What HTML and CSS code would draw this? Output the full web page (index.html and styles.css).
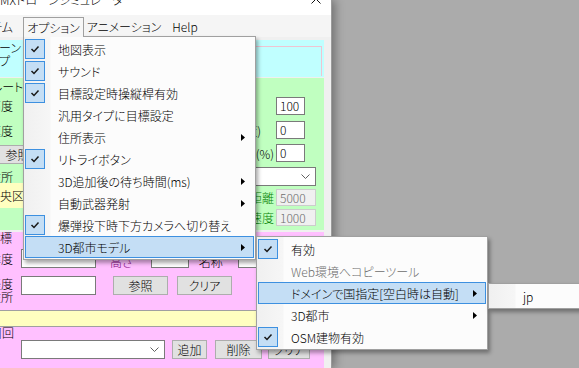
FILE: index.html
```html
<!DOCTYPE html>
<html lang="ja">
<head>
    <meta charset="UTF-8">
    <title>WMXドローンシミュレータ</title>
    <link rel="stylesheet" href="styles.css">
</head>
<body>
    <div class="win">
        <div class="titlebar">
            <span class="title">MXドローンシミュレータ</span>
            <svg class="close" width="10" height="10" viewBox="0 0 10 10"><path d="M0.5 0.5 L9.5 9.5 M9.5 0.5 L0.5 9.5" stroke="#111" stroke-width="1"/></svg>
        </div>
        <div class="menubar">
            <span class="mb mb-sys"><span>システム</span></span>
            <span class="mb mb-opt">オプション</span>
            <span class="mb mb-anim">アニメーション</span>
            <span class="mb mb-help">Help</span>
        </div>

        <div class="client">
            <div class="panel cyan">
                <div class="cy-lbl">ドローン<br>タイプ</div>
                <div class="cy-box"></div>
            </div>

            <div class="panel green">
                <div class="gl">
                    <div class="g-head">ルート条件</div>
                    <div class="frow r-alt"><span class="lbl"><span>高度</span></span></div>
                    <div class="frow r-spd"><span class="lbl"><span>速度</span></span></div>
                    <div class="frow r-btn"><span class="btn btn-ref">参照</span></div>
                    <div class="frow r-addr"><span class="lbl"><span>住所</span></span></div>
                    <div class="addr-box"><span>中央区日本橋1丁目</span></div>
                </div>
                <div class="gr">
                    <div class="rrow"><span class="tb num">100</span></div>
                    <div class="rrow gap6"><span class="lb lb-wide">旋回角(度)</span><span class="tb num">0</span></div>
                    <div class="rrow gap5"><span class="lb">スロットル(%)</span><span class="tb num">0</span></div>
                    <div class="cb cb-right"><svg width="9" height="5" viewBox="0 0 9 5"><path d="M0.5 0.5 L4.5 4.5 L8.5 0.5" fill="none" stroke="#606060"/></svg></div>
                    <div class="rrow gap3"><span class="lb green-t">距離</span><span class="tb dis">5000</span></div>
                    <div class="rrow gap3"><span class="lb green-t">速度</span><span class="tb dis">1000</span></div>
                </div>
            </div>

            <div class="panel pink">
                <div class="p-head">目標</div>
                <div class="frow p-r1">
                    <span class="lbl"><span>緯度</span></span>
                    <span class="tb w75"></span>
                    <span class="purple">高さ</span>
                    <span class="tb w38"></span>
                    <span class="p-name">名称</span>
                    <span class="tb w60"></span>
                </div>
                <div class="frow p-r2">
                    <span class="lbl lbl2"><span>経度</span><span>住所</span></span>
                    <span class="tb w75"></span>
                    <span class="btn w55 ml17">参照</span>
                    <span class="btn w55 ml9">クリア</span>
                </div>
                <div class="p-yel"></div>
                <div class="lbl p-lap"><span>周回</span></div>
                <div class="frow p-r3">
                    <span class="lbl"></span>
                    <div class="cb w144"><svg width="9" height="5" viewBox="0 0 9 5"><path d="M0.5 0.5 L4.5 4.5 L8.5 0.5" fill="none" stroke="#606060"/></svg></div>
                    <span class="btn w35 ml7">追加</span>
                    <span class="btn w47 ml8">削除</span>
                    <span class="btn w42 ml6">クリア</span>
                </div>
            </div>
        </div>
    </div>

    <div class="menu m1">
        <div class="mi"><span class="chk on"><svg width="18" height="18" viewBox="0 0 18 18"><path d="M5.5 9 L8 11.5 L12.5 6.5" fill="none" stroke="#1a1a1a" stroke-width="1.5"/></svg></span><span class="t">地図表示</span></div>
        <div class="mi"><span class="chk on"><svg width="18" height="18" viewBox="0 0 18 18"><path d="M5.5 9 L8 11.5 L12.5 6.5" fill="none" stroke="#1a1a1a" stroke-width="1.5"/></svg></span><span class="t">サウンド</span></div>
        <div class="mi"><span class="chk on"><svg width="18" height="18" viewBox="0 0 18 18"><path d="M5.5 9 L8 11.5 L12.5 6.5" fill="none" stroke="#1a1a1a" stroke-width="1.5"/></svg></span><span class="t">目標設定時操縦桿有効</span></div>
        <div class="mi"><span class="chk"></span><span class="t">汎用タイプに目標設定</span></div>
        <div class="mi"><span class="chk"></span><span class="t">住所表示</span><svg class="arr" width="4" height="7" viewBox="0 0 4 7"><path d="M0 0 L4 3.5 L0 7 Z"/></svg></div>
        <div class="mi"><span class="chk on"><svg width="18" height="18" viewBox="0 0 18 18"><path d="M5.5 9 L8 11.5 L12.5 6.5" fill="none" stroke="#1a1a1a" stroke-width="1.5"/></svg></span><span class="t">リトライボタン</span></div>
        <div class="mi"><span class="chk"></span><span class="t">3D追加後の待ち時間(ms)</span><svg class="arr" width="4" height="7" viewBox="0 0 4 7"><path d="M0 0 L4 3.5 L0 7 Z"/></svg></div>
        <div class="mi"><span class="chk"></span><span class="t">自動武器発射</span><svg class="arr" width="4" height="7" viewBox="0 0 4 7"><path d="M0 0 L4 3.5 L0 7 Z"/></svg></div>
        <div class="mi"><span class="chk on"><svg width="18" height="18" viewBox="0 0 18 18"><path d="M5.5 9 L8 11.5 L12.5 6.5" fill="none" stroke="#1a1a1a" stroke-width="1.5"/></svg></span><span class="t">爆弾投下時下方カメラへ切り替え</span></div>
        <div class="mi hl"><span class="chk"></span><span class="t">3D都市モデル</span><svg class="arr" width="4" height="7" viewBox="0 0 4 7"><path d="M0 0 L4 3.5 L0 7 Z"/></svg></div>
    </div>

    <div class="menu m2">
        <div class="mi"><span class="chk on"><svg width="18" height="18" viewBox="0 0 18 18"><path d="M5.5 9 L8 11.5 L12.5 6.5" fill="none" stroke="#1a1a1a" stroke-width="1.5"/></svg></span><span class="t">有効</span></div>
        <div class="mi off"><span class="chk"></span><span class="t">Web環境へコピーツール</span></div>
        <div class="mi hl"><span class="chk"></span><span class="t">ドメインで国指定[空白時は自動]</span><svg class="arr" width="4" height="7" viewBox="0 0 4 7"><path d="M0 0 L4 3.5 L0 7 Z"/></svg></div>
        <div class="mi"><span class="chk"></span><span class="t">3D都市</span><svg class="arr" width="4" height="7" viewBox="0 0 4 7"><path d="M0 0 L4 3.5 L0 7 Z"/></svg></div>
        <div class="mi"><span class="chk on"><svg width="18" height="18" viewBox="0 0 18 18"><path d="M5.5 9 L8 11.5 L12.5 6.5" fill="none" stroke="#1a1a1a" stroke-width="1.5"/></svg></span><span class="t">OSM建物有効</span></div>
    </div>

    <div class="menu m3">
        <div class="mi"><span class="chk"></span><span class="t">jp</span></div>
    </div>
</body>
</html>
```

FILE: styles.css
```css
* {
    box-sizing: border-box;
}
body {
    margin: 0;
    width: 579px;
    height: 368px;
    overflow: hidden;
    position: relative;
    background: #ababab;
    font-family: "Noto Sans CJK JP", "Noto Sans", sans-serif;
    font-size: 12px;
    font-weight: 300;
    font-feature-settings: "palt";
    color: #000;
}

/* app window */
.win {
    width: 332px;
    height: 368px;
    background: #f0f0f0;
    border-right: 1px solid #9a9a9a;
    box-shadow: 3px 0 9px rgba(0, 0, 0, 0.35);
    overflow: hidden;
}
.titlebar {
    height: 15px;
    background: #fff;
    display: flex;
    justify-content: space-between;
    overflow: hidden;
}
.title {
    margin-top: -8px;
    line-height: 16px;
    white-space: nowrap;
}
.close {
    margin-top: -6px;
    margin-right: 10px;
}
.menubar {
    height: 22px;
    padding-top: 2px;
    background: #f5f5f5;
    display: flex;
}
.mb {
    height: 20px;
    line-height: 19px;
    text-align: center;
    white-space: nowrap;
}
.mb-sys {
    width: 23px;
    padding-right: 10px;
    display: flex;
    justify-content: flex-end;
}
.mb-opt {
    width: 61px;
    border: 1px solid #a0a0a0;
    border-bottom: none;
    background: #f7f7f7;
    position: relative;
    z-index: 3;
}
.mb-anim {
    width: 80px;
}
.mb-help {
    width: 42px;
}

/* form panels */
.client {
    padding: 3px 7px 0 0;
}
.panel {
    overflow: hidden;
}
.cyan {
    height: 37px;
    background: #c0ffff;
    display: flex;
}
.cy-lbl {
    margin-left: -22px;
    padding-top: 1px;
    line-height: 13px;
    white-space: nowrap;
}
.cy-box {
    flex: 1;
    margin: 6px 2px 1px 30px;
    border-top: 1px solid #f0c4d2;
    border-right: 1px solid #f0c4d2;
}
.green {
    height: 152px;
    margin-top: 1px;
    background: #c0ffc0;
    display: flex;
    justify-content: space-between;
}
.pink {
    height: 140px;
    margin-top: 2px;
    background: #ffc0ff;
    display: flex;
    flex-direction: column;
}

.frow {
    display: flex;
    align-items: center;
    gap: 8px;
    height: 18px;
}
.lbl {
    width: 13px;
    flex: none;
    display: flex;
    justify-content: flex-end;
    white-space: nowrap;
}
.lbl2 {
    flex-direction: column;
    align-items: flex-end;
    justify-content: flex-start;
    line-height: 13px;
    padding-top: 1px;
}

.gl {
    width: 150px;
    display: flex;
    flex-direction: column;
}
.g-head {
    height: 17px;
    line-height: 17px;
    margin-left: -9px;
    white-space: nowrap;
}
.r-alt { margin-top: 1px; }
.r-spd { margin-top: 7px; }
.r-btn { margin-top: 8px; height: 15px; }
.r-addr { margin-top: 7px; height: 14px; }
.addr-box {
    height: 25px;
    line-height: 25px;
    background: #ffffc0;
    white-space: nowrap;
    overflow: hidden;
}
.addr-box span {
    margin-left: -12px;
}
.btn-ref {
    margin-left: -10px;
    width: 55px;
    height: 15px;
    line-height: 13px;
}

.gr {
    width: 125px;
    padding: 19px 8px 0 0;
    display: flex;
    flex-direction: column;
}
.rrow {
    display: flex;
    justify-content: flex-end;
    align-items: center;
    gap: 2px;
    height: 18px;
    white-space: nowrap;
}
.gap6 { margin-top: 6px; }
.gap5 { margin-top: 5px; }
.gap3 { margin-top: 3px; height: 17px; }
.lb-wide {
    margin-right: 13px;
}
.green-t {
    color: #008000;
}
.tb {
    display: block;
    height: 18px;
    background: #fff;
    border: 1px solid #7a7a7a;
    padding-left: 3px;
    line-height: 16px;
    flex: none;
}
.num {
    width: 29px;
    margin-right: 11px;
}
.dis {
    width: 40px;
    height: 17px;
    line-height: 15px;
    background: #f0f0f0;
    border-color: #cccccc;
    color: #6d6d6d;
}
.cb {
    height: 19px;
    background: #fff;
    border: 1px solid #7a7a7a;
    display: flex;
    align-items: center;
    justify-content: flex-end;
    padding-right: 5px;
    flex: none;
}
.cb-right {
    width: 115px;
    margin-top: 5px;
    align-self: flex-end;
}
.btn {
    display: block;
    flex: none;
    height: 19px;
    line-height: 17px;
    text-align: center;
    background: #e1e1e1;
    border: 1px solid #adadad;
}

.p-head {
    height: 12px;
    line-height: 12px;
    margin-left: -12px;
    white-space: nowrap;
}
.p-r1 {
    margin-top: 5px;
    height: 19px;
    gap: 0;
}
.p-r1 .lbl { margin-right: 8px; }
.p-r1 .tb { height: 19px; }
.purple,
.p-name {
    align-self: flex-end;
    line-height: 13px;
}
.purple {
    color: #800080;
    margin-left: 14px;
}
.w75 { width: 75px; }
.w38 { width: 38px; margin-left: 18px; }
.w60 { width: 60px; margin-left: 15px; }
.p-name { margin-left: 10px; }
.p-r2 {
    margin-top: 8px;
    height: 27px;
    align-items: flex-start;
    gap: 0;
}
.p-r2 .lbl { margin-right: 8px; }
.p-r2 .tb { height: 19px; }
.w55 { width: 55px; }
.w35 { width: 35px; }
.w47 { width: 47px; }
.w42 { width: 42px; }
.w144 { width: 144px; }
.ml17 { margin-left: 17px; }
.ml9 { margin-left: 9px; }
.ml8 { margin-left: 8px; }
.ml7 { margin-left: 7px; }
.ml6 { margin-left: 6px; }
.p-yel {
    margin-top: 7px;
    height: 17px;
    background: #ffffc0;
    border-top: 1px solid #a0a0a0;
    border-bottom: 1px solid #a0a0a0;
}
.p-lap {
    width: 14px;
    height: 12px;
    line-height: 12px;
}
.p-r3 {
    margin-top: 1px;
    height: 19px;
    gap: 0;
}
.p-r3 .lbl { margin-right: 8px; }

/* popup menus */
.menu {
    position: absolute;
    z-index: 2;
    border: 1px solid #a0a0a0;
    padding: 1px;
    background: linear-gradient(to right, #f0f0f0 0, #f6f6f6 26px, #fcfcfc 27px);
    box-shadow: 2px 3px 4px rgba(0, 0, 0, 0.35);
}
.m1 { left: 23px; top: 36px; width: 233px; }
.m2 { left: 256px; top: 236px; width: 232px; }
.m3 { left: 488px; top: 283px; width: 110px; }
.mi {
    height: 22px;
    display: flex;
    align-items: center;
    border: 1px solid transparent;
    white-space: nowrap;
}
.mi.hl {
    background: #c4def5;
    border-color: #3d90e0;
}
.mi.off {
    color: #6d6d6d;
}
.chk {
    width: 20px;
    height: 20px;
    margin-left: -1px;
    flex: none;
}
.chk.on {
    background: #c4def5;
    border: 1px solid #3d90e0;
}
.chk svg {
    display: block;
}
.t {
    margin-left: 13px;
}
.arr {
    margin-left: auto;
    margin-right: 8px;
}
```
